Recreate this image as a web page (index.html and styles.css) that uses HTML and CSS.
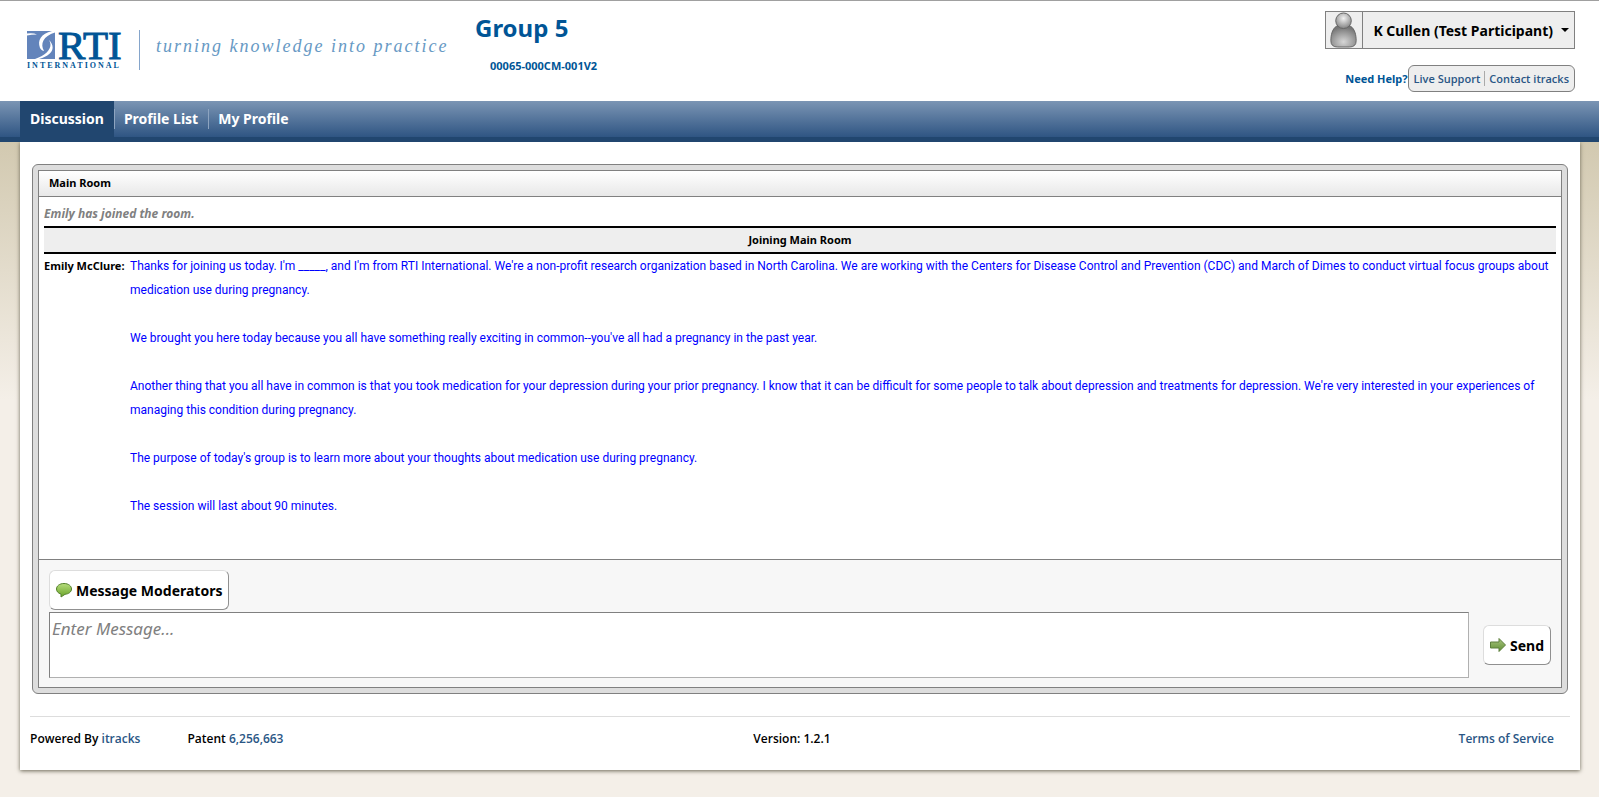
FILE: index.html
```html
<!DOCTYPE html>
<html lang="en">
<head>
    <meta charset="UTF-8">
    <title>Group 5 - Discussion</title>
    <meta name="viewport" content="width=device-width, initial-scale=1.0">
    <link rel="stylesheet" href="styles.css">
</head>
<body>

    <header class="site-header">
        <div class="brand">
            <div class="logo">
                <div class="logo-top">
                    <svg class="logo-mark" width="28" height="28" viewBox="0 0 28 28">
                        <rect width="28" height="28" fill="#6384bb"/>
                        <path d="M0 2.500 Q6 1.500 10 3.500 Q4 3.500 0 4.500 Z" fill="#fff"/>
                        <path d="M28 0 H25 C14 3 10 9 13 17 C14 19 16 20 17 20 C13 13 16 5 28 1.500 Z" fill="#fff"/>
                        <path d="M22 9 C26 15 22 23 8 28 H12 C26 24 29 16 22 9 Z" fill="#fff"/>
                    </svg>
                    <span class="logo-name">RTI</span>
                </div>
                <div class="logo-sub">INTERNATIONAL</div>
            </div>
            <div class="tagline">turning knowledge into practice</div>
        </div>

        <div class="group-info">
            <h1>Group 5</h1>
            <p class="group-code">00065-000CM-001V2</p>
        </div>

        <div class="account">
            <button type="button" class="user-menu">
                <svg class="avatar" width="37" height="36" viewBox="0 0 37 36">
                    <defs>
                        <radialGradient id="head" cx="50%" cy="35%" r="60%">
                            <stop offset="0" stop-color="#f2f2f2"/>
                            <stop offset="1" stop-color="#8c8c8c"/>
                        </radialGradient>
                        <radialGradient id="torso" cx="50%" cy="75%" r="70%">
                            <stop offset="0" stop-color="#d6d6d6"/>
                            <stop offset="1" stop-color="#757575"/>
                        </radialGradient>
                    </defs>
                    <path d="M11 14 C6 17 5 24 5 29 Q5 35.500 12 35.500 H24 Q31 35.500 31 29 C31 24 30 17 25 14 Z" fill="url(#torso)" stroke="#666"/>
                    <circle cx="18" cy="8.500" r="8" fill="url(#head)" stroke="#666"/>
                </svg>
                <span class="user-name">K Cullen (Test Participant)</span>
                <span class="caret"></span>
            </button>
            <div class="help">
                <span>Need Help?</span>
                <div class="help-links">
                    <a href="#">Live Support</a>
                    <a href="#">Contact itracks</a>
                </div>
            </div>
        </div>
    </header>

    <nav class="main-nav">
        <a href="#" class="active">Discussion</a>
        <a href="#">Profile List</a>
        <a href="#">My Profile</a>
    </nav>

    <main class="page">
        <section class="room">
            <div class="room-inner">
                <h2 class="room-title">Main Room</h2>
                <div class="messages">
                    <p class="notice">Emily has joined the room.</p>
                    <p class="joining">Joining Main Room</p>
                    <div class="message">
                        <strong class="author">Emily McClure:</strong>
                        <div class="text">
                            <p>Thanks for joining us today. I'm _____, and I'm from RTI International. We're a non-profit research organization based in North Carolina. We are working with the Centers for Disease Control and Prevention (CDC) and March of Dimes to conduct virtual focus groups about<br>medication use during pregnancy.</p>
                            <p>We brought you here today because you all have something really exciting in common--you've all had a pregnancy in the past year.</p>
                            <p>Another thing that you all have in common is that you took medication for your depression during your prior pregnancy. I know that it can be difficult for some people to talk about depression and treatments for depression. We're very interested in your experiences of<br>managing this condition during pregnancy.</p>
                            <p>The purpose of today's group is to learn more about your thoughts about medication use during pregnancy.</p>
                            <p>The session will last about 90 minutes.</p>
                        </div>
                    </div>
                </div>
                <form class="composer">
                    <button type="button" class="btn">
                        <svg width="16" height="16" viewBox="0 0 16 16">
                            <defs>
                                <linearGradient id="bubble" x1="0" y1="0" x2="0" y2="1">
                                    <stop offset="0" stop-color="#b5dc7c"/>
                                    <stop offset="1" stop-color="#6aa328"/>
                                </linearGradient>
                            </defs>
                            <path d="M8 1.500 C12.500 1.500 15.500 4 15.500 7 C15.500 10 12.500 12 9 12.300 L5 15 V12 C2 11.300 .5 9.300 .5 7 C.5 4 3.500 1.500 8 1.500 Z" fill="url(#bubble)" stroke="#55812c"/>
                        </svg>
                        Message Moderators
                    </button>
                    <div class="entry">
                        <textarea placeholder="Enter Message..." aria-label="Enter Message"></textarea>
                        <button type="button" class="btn">
                            <svg width="16" height="16" viewBox="0 0 16 16">
                                <defs>
                                    <linearGradient id="arrow" x1="0" y1="0" x2="0" y2="1">
                                        <stop offset="0" stop-color="#a9c47f"/>
                                        <stop offset="1" stop-color="#5f8f33"/>
                                    </linearGradient>
                                </defs>
                                <path d="M.5 5 H9 V1.500 L15.500 8 L9 14.500 V11 H.5 Z" fill="url(#arrow)" stroke="#5c7f3c"/>
                            </svg>
                            Send
                        </button>
                    </div>
                </form>
            </div>
        </section>

        <footer class="site-footer">
            <div class="footer-left">
                <span>Powered By <a href="#">itracks</a></span>
                <span>Patent <a href="#">6,256,663</a></span>
            </div>
            <span>Version: 1.2.1</span>
            <a href="#" class="terms">Terms of Service</a>
        </footer>
    </main>

</body>
</html>
```

FILE: styles.css
```css
* {
    box-sizing: border-box;
}

body {
    margin: 0;
    min-height: 100vh;
    font-family: "Segoe UI", "Noto Sans", "Open Sans", sans-serif;
    font-size: 12px;
    line-height: 24px;
    color: #000;
    background: #f4efe8 linear-gradient(#d2c9b0 142px, #f4efe8 400px) no-repeat;
}

h1, h2, p {
    margin: 0;
}

a {
    color: #2a5685;
    text-decoration: none;
}

button, textarea {
    font-family: inherit;
    color: inherit;
}

/* Header */
.site-header {
    display: flex;
    height: 101px;
    padding: 10px 24px 0 27px;
    background: #fff;
    border-top: 1px solid #a0a0a0;
}

.brand {
    display: flex;
    width: 448px;
    padding-top: 18px;
}

.logo {
    width: 97px;
    padding-top: 1px;
    color: #005596;
    font-family: "Liberation Serif", serif;
}

.logo-top {
    display: flex;
    height: 31px;
    gap: 3px;
    padding-top: 1px;
}

.logo-mark {
    flex-shrink: 0;
}

.logo-name {
    font-size: 41px;
    line-height: 29px;
    -webkit-text-stroke: 1px #005596;
}

.logo-sub {
    font-size: 8px;
    line-height: 10px;
    font-weight: bold;
    letter-spacing: 2px;
}

.tagline {
    height: 40px;
    margin: 1px 0 0 15px;
    padding-left: 16px;
    border-left: 1px solid #85a5cb;
    font-family: "Liberation Serif", serif;
    font-size: 18px;
    line-height: 32px;
    font-style: italic;
    letter-spacing: 2px;
    color: #6799c4;
    white-space: nowrap;
}

.group-info {
    color: #005596;
}

.group-info h1 {
    font-size: 24px;
    line-height: 34px;
}

.group-code {
    padding: 9px 0 0 15px;
    font-size: 11px;
    font-weight: bold;
}

.account {
    display: flex;
    flex-direction: column;
    align-items: flex-end;
    gap: 16px;
    margin-left: auto;
}

.user-menu {
    display: flex;
    align-items: center;
    height: 38px;
    padding: 0 5px 0 0;
    background: #eee;
    border: 1px solid #808080;
    font-size: 14px;
    font-weight: bold;
    cursor: pointer;
}

.avatar {
    border-right: 1px solid #808080;
}

.user-name {
    padding: 0 8px 0 10px;
}

.caret {
    border: 4px solid transparent;
    border-top-color: #000;
    border-bottom: 0;
}

.help {
    display: flex;
    align-items: center;
    font-size: 11px;
    font-weight: bold;
    color: #005596;
}

.help-links {
    display: flex;
    align-items: center;
    height: 27px;
    padding: 0 5px;
    background: #eee;
    border: 1px solid #808080;
    border-radius: 6px;
    font-family: "Segoe UI", "Open Sans", sans-serif;
    font-weight: 600;
    line-height: 15px;
}

.help-links a + a {
    margin-left: 4px;
    padding-left: 4px;
    border-left: 1px solid #aaa;
}

/* Navigation */
.main-nav {
    display: flex;
    height: 41px;
    padding-left: 20px;
    background: linear-gradient(#7b95b4, #2f5583);
    border-bottom: 5px solid #21466f;
    font-size: 14px;
    font-weight: bold;
}

.main-nav a {
    padding: 6px 10px;
    color: #fff;
}

.main-nav .active {
    background: #21466f;
}

.main-nav a + a {
    background: linear-gradient(#8da4c0, #8da4c0) left 8px / 1px 20px no-repeat;
}

/* Page */
.page {
    margin: 0 19px 26px 20px;
    padding: 22px 10px 0;
    background: #fff;
    box-shadow: 0 1px 4px #6b6655;
    clip-path: inset(0 -6px -6px -6px);
}

.room {
    margin: 0 2px;
    padding: 5px;
    background: #ddd;
    border: 1px solid #808080;
    border-radius: 6px;
}

.room-inner {
    background: #fff;
    border: 1px solid #808080;
}

.room-title {
    height: 26px;
    padding-left: 10px;
    background: linear-gradient(#fff, #e8e8e8);
    border-bottom: 1px solid #808080;
    font-size: 11px;
    line-height: 24px;
}

.messages {
    min-height: 362px;
    padding: 5px;
}

.notice {
    font-weight: bold;
    font-style: italic;
    color: #808080;
}

.joining {
    height: 28px;
    background: #eee;
    border-top: 2px solid #000;
    border-bottom: 2px solid #000;
    font-size: 11px;
    font-weight: bold;
    text-align: center;
}

.message {
    display: flex;
}

.author {
    width: 86px;
    flex-shrink: 0;
    font-size: 11px;
    white-space: nowrap;
}

.text {
    font-family: "Segoe UI", Roboto, sans-serif;
    color: #00f;
}

.text p {
    margin-bottom: 24px;
}

.composer {
    padding: 10px 10px 9px;
    background: #f7f7f7;
    border-top: 1px solid #808080;
}

.btn {
    display: flex;
    align-items: center;
    gap: 4px;
    height: 40px;
    padding: 0 6px;
    background: #fff;
    border: 1px solid;
    border-color: #ddd #909090 #909090 #ddd;
    border-radius: 6px;
    font-size: 14px;
    font-weight: bold;
    cursor: pointer;
}

.entry {
    display: flex;
    align-items: center;
    gap: 14px;
    margin-top: 2px;
}

.entry textarea {
    flex: 1;
    height: 66px;
    padding: 2px;
    background: #fff;
    border: 1px solid;
    border-color: #808080 #b0b0b0 #b0b0b0 #808080;
    border-radius: 0;
    font-size: 17px;
    line-height: 28px;
    resize: none;
}

.entry textarea::placeholder {
    font-style: italic;
    color: #808080;
}

/* Footer */
.site-footer {
    display: grid;
    grid-template-columns: 1fr auto 1fr;
    margin-top: 22px;
    padding: 10px 16px 19px 0;
    border-top: 1px solid #ddd;
    font-family: "Segoe UI", "Open Sans", sans-serif;
    font-weight: 600;
}

.footer-left {
    display: flex;
    gap: 47px;
}

.terms {
    justify-self: end;
}
```
